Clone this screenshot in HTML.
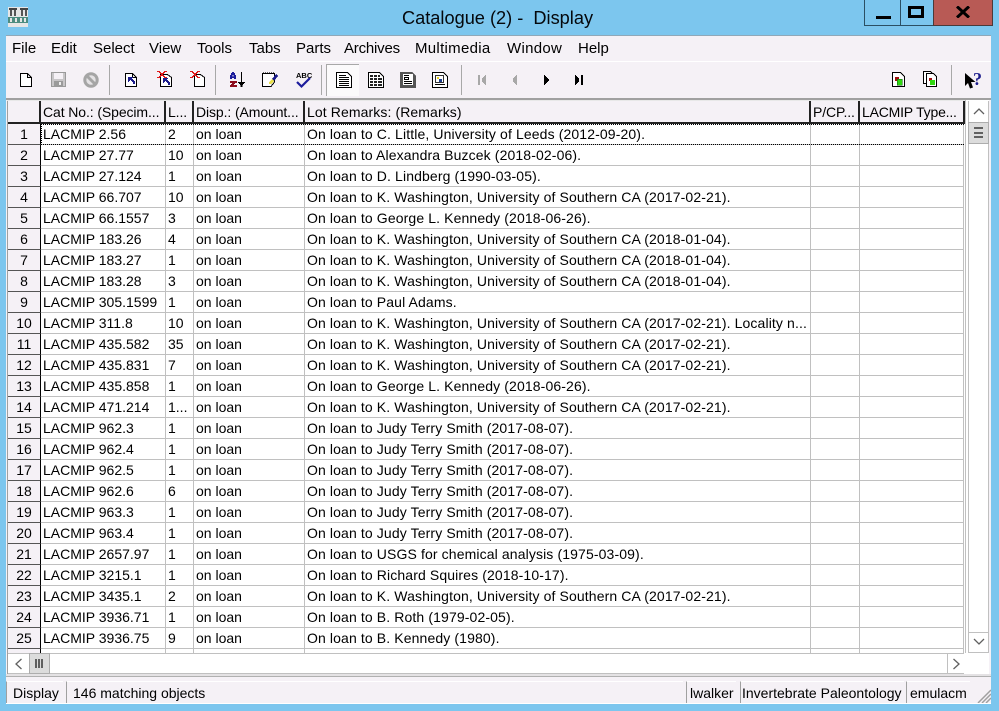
<!DOCTYPE html>
<html><head><meta charset="utf-8"><style>
html,body{margin:0;padding:0;width:999px;height:711px;overflow:hidden;background:#7cc6ee}
*{box-sizing:border-box}
body{font-family:"Liberation Sans",sans-serif;font-size:14px;color:#000;position:relative}
.a{position:absolute}
.t{position:absolute;white-space:pre;line-height:16px}
#menu span{position:absolute;top:41px;line-height:16px;font-size:15px}
svg{position:absolute;shape-rendering:crispEdges}
table{position:absolute;left:8px;top:124px;border-collapse:separate;border-spacing:0;table-layout:fixed;width:956px;background:#fff}
td{height:21px;padding:1px 0 0 2px;vertical-align:top;border-right:1px solid #c0c0c0;border-bottom:1px solid #c0c0c0;white-space:nowrap;overflow:hidden;line-height:18px;font-size:14px}
td:first-child{background:#f5f1f6;text-align:center;border-right:1px solid #000;border-bottom:1px solid #555;padding:1px 0 0}
td:nth-child(5){letter-spacing:.12px}
.h{position:absolute;top:101px;height:23px;background:#f5f1f6;border-right:2px solid #222;border-bottom:2px solid #222;line-height:23px;padding-left:2px;white-space:nowrap;overflow:hidden;letter-spacing:-.1px}
.sep{position:absolute;top:65px;height:30px;width:1px;background:#a8a8a8}
.st{position:absolute;top:681px;height:22px;border-left:1px solid #a0a0a0;border-top:1px solid #fff;line-height:23px;white-space:pre}
</style></head><body>

<svg style="left:8px;top:7px" width="20" height="20" viewBox="0 0 20 20"><rect width="20" height="20" fill="#e6e6e6"/><rect x="2" y="2" width="2" height="7" fill="#555"/><rect x="6" y="2" width="2" height="7" fill="#555"/><rect x="13" y="2" width="2" height="7" fill="#555"/><rect x="17" y="2" width="2" height="7" fill="#555"/><rect x="1" y="1" width="8" height="2" fill="#444"/><rect x="12" y="1" width="8" height="2" fill="#444"/><rect x="0" y="10" width="20" height="6" fill="#4d8c80"/><rect x="2" y="11" width="2" height="4" fill="#e6e6e6"/><rect x="7" y="11" width="2" height="4" fill="#e6e6e6"/><rect x="12" y="11" width="2" height="4" fill="#e6e6e6"/><rect x="16" y="11" width="2" height="4" fill="#e6e6e6"/></svg>
<div class="t" style="left:402px;top:7px;font-size:18.2px;line-height:22px;color:#05080c">Catalogue (2) -  Display</div>

<div class="a" style="left:864px;top:0;width:37px;height:26px;border:1px solid #2b4f63;border-top:0;border-right:0"></div>
<div class="a" style="left:900px;top:0;width:34px;height:26px;border:1px solid #2b4f63;border-top:0;border-right:0"></div>
<div class="a" style="left:933px;top:0;width:60px;height:26px;background:#b85a55;border:1px solid #4a3a3a;border-top:0"></div>
<div class="a" style="left:876px;top:16px;width:15px;height:3px;background:#000"></div>
<div class="a" style="left:908px;top:6px;width:16px;height:12px;border:3px solid #000"></div>
<svg style="left:956px;top:6px;shape-rendering:auto" width="14" height="12"><path d="M1 0.500L13 11.500M13 0.500L1 11.500" stroke="#000" stroke-width="3" fill="none"/></svg>

<div class="a" style="left:6px;top:35px;width:985px;height:669px;background:#f5f1f6;border-top:1px solid #90a8b8"></div>
<div class="a" style="left:6px;top:61px;width:985px;height:1px;background:#fff"></div>
<div id="menu">
<span style="left:12px">File</span><span style="left:51px">Edit</span><span style="left:93px">Select</span><span style="left:149px">View</span><span style="left:197px">Tools</span><span style="left:249px">Tabs</span><span style="left:296px">Parts</span><span style="left:344px;letter-spacing:-.2px">Archives</span><span style="left:415px;letter-spacing:.3px">Multimedia</span><span style="left:507px;letter-spacing:.3px">Window</span><span style="left:578px">Help</span>
</div>

<div class="sep" style="left:109px"></div><div class="sep" style="left:215px"></div><div class="sep" style="left:321px"></div><div class="sep" style="left:461px"></div><div class="sep" style="left:951px"></div>
<div class="a" style="left:326px;top:64px;width:33px;height:32px;background:#fbfafb;border-left:1px solid #a8a8a8;border-top:1px solid #a8a8a8"></div>

<svg style="left:19px;top:72px" width="14" height="16"><path d="M1.500 1.500H8.500L12.500 5.500V14.500H1.500Z M8.500 1.500V5.500H12.500" fill="#fff" stroke="#000"/></svg>
<svg style="left:51px;top:72px" width="15" height="15"><path d="M.5.5H14.500V14.500H.5Z" fill="#c8c6c8" stroke="#9a9a9a"/><rect x="3" y="1" width="9" height="6" fill="#f5f1f6"/><rect x="3" y="9" width="9" height="5" fill="#9a9a9a"/><rect x="8" y="10" width="2" height="3" fill="#eee"/></svg>
<svg style="left:83px;top:72px;shape-rendering:auto" width="16" height="16"><circle cx="8" cy="8" r="6.200" fill="#e4e2e4" stroke="#a5a5a5" stroke-width="3"/><path d="M4 4L12 12" stroke="#a5a5a5" stroke-width="3"/></svg>

<svg style="left:124px;top:72px" width="14" height="16"><path d="M1.500 1.500H8.500L12.500 5.500V14.500H1.500Z" fill="#fff" stroke="#000"/><path d="M8.500 1.500V5.500H12.500" fill="none" stroke="#000"/><path d="M4 5H9V6H8V7H9V8H10V9H11V12H9V10H8V9H7V8H6V9H5V10H4Z" fill="#1c1c8c"/></svg>
<svg style="left:157px;top:71px" width="17" height="17"><path d="M3.500 3.500H10.500L14.500 6.500V15.500H3.500Z" fill="#fff" stroke="#000"/><path d="M6 7H11V8H10V9H11V10H12V11H13V14H11V12H10V11H9V10H8V11H7V12H6Z" fill="#1c1c8c"/><path d="M0 0H3V1H4V2H6V1H7V0H10V1H8V2H7V3H6V4H7V5H8V6H10V7H7V6H6V5H4V6H3V7H0V6H2V5H3V4H4V3H3V2H2V1H0Z" fill="#e01818"/></svg>
<svg style="left:190px;top:71px" width="17" height="17"><path d="M4.500 3.500H10.500L14.500 6.500V15.500H4.500Z" fill="#fff" stroke="#000"/><path d="M0 0H3V1H4V2H6V1H7V0H10V1H8V2H7V3H6V4H7V5H8V6H10V7H7V6H6V5H4V6H3V7H0V6H2V5H3V4H4V3H3V2H2V1H0Z" fill="#e01818"/></svg>

<svg style="left:229px;top:71px" width="16" height="18"><path d="M3 1H5V2H6V4H7V8H5V7H3V8H1V4H2V2H3Z M3.500 4V5.500H4.500V4Z" fill="#1c1c9c" fill-rule="evenodd"/><path d="M1 10H8V12H6V13H5V14H8V16H1V14H2V13H3V12H1Z" fill="#8c0c1c"/><rect x="12" y="1" width="1" height="11" fill="#000"/><path d="M9 11H16V12H15V13H14V14H13.500V16H11.500V14H11V13H10V12H9Z" fill="#000"/></svg>
<svg style="left:261px;top:71px" width="18" height="18"><path d="M1.500 2.500H13.500V11L10 15.500H1.500Z" fill="#fff" stroke="#000"/><path d="M2 1H3V2H2ZM4 1H5V2H4ZM6 1H7V2H6ZM8 1H9V2H8ZM10 1H11V2H10ZM12 1H13V2H12Z" fill="#666"/><path d="M8 13H10L13 10L11 8L8 11Z" fill="#e8e048"/><path d="M11 8L15 3L17 5L13 10Z" fill="#1c1c8c"/></svg>
<svg style="left:295px;top:70px;shape-rendering:auto" width="17" height="19"><text x="1" y="8" font-family="Liberation Sans,sans-serif" font-size="7.500" font-weight="bold" fill="#000">ABC</text><path d="M2 12L6.500 16.500L15 8" fill="none" stroke="#1c1c9c" stroke-width="2.200"/></svg>

<svg style="left:336px;top:72px" width="16" height="16"><path d="M.5.5H11.500L15.500 4.500V15.500H.5Z" fill="#fff" stroke="#000"/><path d="M3 5H13V6H3ZM3 7H13V8H3ZM3 9H13V10H3ZM3 11H13V12H3ZM3 13H13V14H3ZM3 3H10V4H3Z" fill="#000"/></svg>
<svg style="left:368px;top:72px" width="16" height="16"><path d="M.5.5H11.500L15.500 4.500V15.500H.5Z" fill="#fff" stroke="#000"/><path d="M2 3H5V5H2ZM6 3H9V5H6ZM10 3H12V5H10ZM2 6H5V8H2ZM6 6H9V8H6ZM10 6H14V8H10ZM2 9H5V11H2ZM6 9H9V11H6ZM10 9H14V11H10ZM2 12H5V14H2ZM6 12H9V14H6ZM10 12H14V14H10Z" fill="#222"/></svg>
<svg style="left:400px;top:72px" width="16" height="16"><path d="M0 0H12L16 4V16H0Z" fill="#555"/><rect x="3" y="2" width="10" height="11" fill="#fff"/><path d="M4 3H9V4H4ZM4 5H9V8H4ZM4 9H12V10H4ZM4 11H12V12H4Z" fill="#000"/><rect x="5" y="6" width="3" height="1" fill="#fff"/></svg>
<svg style="left:432px;top:72px" width="16" height="16"><path d="M.5.5H11.500L15.500 4.500V15.500H.5Z" fill="#fff" stroke="#000"/><rect x="3.500" y="3.500" width="8" height="7" fill="#fff" stroke="#333"/><rect x="5" y="5" width="2" height="2" fill="#e8d020"/><rect x="7" y="7" width="3" height="3" fill="#1c3c8c"/><path d="M3 12H13V13H3Z" fill="#000"/></svg>

<svg style="left:477px;top:74px" width="11" height="12"><path d="M1 1H3V11H1ZM9 1V11H8V10H7V9H6V8H5V4H6V3H7V2H8V1Z" fill="#a8a8a8"/></svg>
<svg style="left:511px;top:74px" width="8" height="12"><path d="M6 1V11H5V10H4V9H3V8H2V4H3V3H4V2H5V1Z" fill="#a8a8a8"/></svg>
<svg style="left:543px;top:74px" width="8" height="12"><path d="M1 1V11H2V10H3V9H4V8H5V7H6V5H5V4H4V3H3V2H2V1Z" fill="#000"/></svg>
<svg style="left:574px;top:74px" width="11" height="12"><path d="M1 1V11H2V10H3V9H4V8H5V4H4V3H3V2H2V1ZM7 1H9V11H7Z" fill="#000"/></svg>

<svg style="left:892px;top:72px" width="13" height="15"><path d="M.5.5H8.500L12.500 4.500V14.500H.5Z" fill="#fff" stroke="#000"/><rect x="3" y="5" width="4" height="4" fill="#a01010"/><rect x="5" y="7" width="5" height="6" fill="#30d810" stroke="#0a5a0a" stroke-width=".5"/></svg>
<svg style="left:923px;top:71px" width="14" height="16"><path d="M.5.5H7.500L9.500 2.500V12.500H.5Z" fill="#fff" stroke="#000"/><path d="M3.500 2.500H10.500L13.500 5.500V15.500H3.500Z" fill="#fff" stroke="#000"/><rect x="6" y="7" width="3" height="3" fill="#a01010"/><rect x="7" y="9" width="5" height="5" fill="#30d810"/></svg>
<svg style="left:964px;top:71px;shape-rendering:auto" width="20" height="19"><path d="M1 2L1 15L4 12L6 17.500L9 16.500L7 11L11.500 11Z" fill="#000"/><text x="9" y="14" font-family="Liberation Serif,serif" font-size="18" font-weight="bold" fill="#1c1c8c">?</text></svg>

<div class="a" style="left:6px;top:98px;width:985px;height:2px;background:#a0a0a0"></div>
<div class="a" style="left:7px;top:100px;width:982px;height:574px;background:#fff;border-left:1px solid #a0a0a0"></div>
<div class="a" style="left:7px;top:100px;width:958px;height:1px;background:#e8e8e8"></div>

<div class="h" style="left:8px;width:33px"></div>
<div class="h" style="left:41px;width:125px">Cat No.: (Specim...</div>
<div class="h" style="left:166px;width:28px">L...</div>
<div class="h" style="left:194px;width:111px">Disp.: (Amount...</div>
<div class="h" style="left:305px;width:506px;letter-spacing:.1px">Lot Remarks: (Remarks)</div>
<div class="h" style="left:811px;width:49px">P/CP...</div>
<div class="h" style="left:860px;width:105px;letter-spacing:-.2px">LACMIP Type...</div>

<table><colgroup><col style="width:33px"><col style="width:125px"><col style="width:28px"><col style="width:111px"><col style="width:506px"><col style="width:49px"><col style="width:104px"></colgroup>
<tr><td>1</td><td>LACMIP 2.56</td><td>2</td><td>on loan</td><td>On loan to C. Little, University of Leeds (2012-09-20).</td><td></td><td></td></tr>
<tr><td>2</td><td>LACMIP 27.77</td><td>10</td><td>on loan</td><td>On loan to Alexandra Buzcek (2018-02-06).</td><td></td><td></td></tr>
<tr><td>3</td><td>LACMIP 27.124</td><td>1</td><td>on loan</td><td>On loan to D. Lindberg (1990-03-05).</td><td></td><td></td></tr>
<tr><td>4</td><td>LACMIP 66.707</td><td>10</td><td>on loan</td><td>On loan to K. Washington, University of Southern CA (2017-02-21).</td><td></td><td></td></tr>
<tr><td>5</td><td>LACMIP 66.1557</td><td>3</td><td>on loan</td><td>On loan to George L. Kennedy (2018-06-26).</td><td></td><td></td></tr>
<tr><td>6</td><td>LACMIP 183.26</td><td>4</td><td>on loan</td><td>On loan to K. Washington, University of Southern CA (2018-01-04).</td><td></td><td></td></tr>
<tr><td>7</td><td>LACMIP 183.27</td><td>1</td><td>on loan</td><td>On loan to K. Washington, University of Southern CA (2018-01-04).</td><td></td><td></td></tr>
<tr><td>8</td><td>LACMIP 183.28</td><td>3</td><td>on loan</td><td>On loan to K. Washington, University of Southern CA (2018-01-04).</td><td></td><td></td></tr>
<tr><td>9</td><td>LACMIP 305.1599</td><td>1</td><td>on loan</td><td>On loan to Paul Adams.</td><td></td><td></td></tr>
<tr><td>10</td><td>LACMIP 311.8</td><td>10</td><td>on loan</td><td>On loan to K. Washington, University of Southern CA (2017-02-21). Locality n...</td><td></td><td></td></tr>
<tr><td>11</td><td>LACMIP 435.582</td><td>35</td><td>on loan</td><td>On loan to K. Washington, University of Southern CA (2017-02-21).</td><td></td><td></td></tr>
<tr><td>12</td><td>LACMIP 435.831</td><td>7</td><td>on loan</td><td>On loan to K. Washington, University of Southern CA (2017-02-21).</td><td></td><td></td></tr>
<tr><td>13</td><td>LACMIP 435.858</td><td>1</td><td>on loan</td><td>On loan to George L. Kennedy (2018-06-26).</td><td></td><td></td></tr>
<tr><td>14</td><td>LACMIP 471.214</td><td>1...</td><td>on loan</td><td>On loan to K. Washington, University of Southern CA (2017-02-21).</td><td></td><td></td></tr>
<tr><td>15</td><td>LACMIP 962.3</td><td>1</td><td>on loan</td><td>On loan to Judy Terry Smith (2017-08-07).</td><td></td><td></td></tr>
<tr><td>16</td><td>LACMIP 962.4</td><td>1</td><td>on loan</td><td>On loan to Judy Terry Smith (2017-08-07).</td><td></td><td></td></tr>
<tr><td>17</td><td>LACMIP 962.5</td><td>1</td><td>on loan</td><td>On loan to Judy Terry Smith (2017-08-07).</td><td></td><td></td></tr>
<tr><td>18</td><td>LACMIP 962.6</td><td>6</td><td>on loan</td><td>On loan to Judy Terry Smith (2017-08-07).</td><td></td><td></td></tr>
<tr><td>19</td><td>LACMIP 963.3</td><td>1</td><td>on loan</td><td>On loan to Judy Terry Smith (2017-08-07).</td><td></td><td></td></tr>
<tr><td>20</td><td>LACMIP 963.4</td><td>1</td><td>on loan</td><td>On loan to Judy Terry Smith (2017-08-07).</td><td></td><td></td></tr>
<tr><td>21</td><td>LACMIP 2657.97</td><td>1</td><td>on loan</td><td>On loan to USGS for chemical analysis (1975-03-09).</td><td></td><td></td></tr>
<tr><td>22</td><td>LACMIP 3215.1</td><td>1</td><td>on loan</td><td>On loan to Richard Squires (2018-10-17).</td><td></td><td></td></tr>
<tr><td>23</td><td>LACMIP 3435.1</td><td>2</td><td>on loan</td><td>On loan to K. Washington, University of Southern CA (2017-02-21).</td><td></td><td></td></tr>
<tr><td>24</td><td>LACMIP 3936.71</td><td>1</td><td>on loan</td><td>On loan to B. Roth (1979-02-05).</td><td></td><td></td></tr>
<tr><td>25</td><td>LACMIP 3936.75</td><td>9</td><td>on loan</td><td>On loan to B. Kennedy (1980).</td><td></td><td></td></tr>
<tr><td>&nbsp;</td><td></td><td></td><td></td><td></td><td></td><td></td></tr>
</table>
<div class="a" style="left:41px;top:124px;width:923px;height:1px;border-top:1px dotted #000"></div>
<div class="a" style="left:41px;top:144px;width:927px;height:1px;border-top:1px dotted #000"></div>
<div class="a" style="left:41px;top:124px;width:1px;height:21px;border-left:1px dotted #000"></div>

<div class="a" style="left:8px;top:653px;width:956px;height:21px;background:#fff;border-top:1px solid #c0c0c0;border-bottom:1px solid #c0c0c0"></div>
<div class="a" style="left:29px;top:653px;width:21px;height:21px;background:#dcdcdc;border:1px solid #adadad"></div>
<div class="a" style="left:35px;top:659px;width:2px;height:9px;background:#606060"></div><div class="a" style="left:38px;top:659px;width:2px;height:9px;background:#606060"></div><div class="a" style="left:41px;top:659px;width:2px;height:9px;background:#606060"></div>
<div class="a" style="left:947px;top:653px;width:1px;height:21px;background:#c0c0c0"></div>
<svg style="left:14px;top:658px;shape-rendering:auto" width="10" height="12"><path d="M7.500 1L2 6L7.500 11" fill="none" stroke="#606060" stroke-width="1.300"/></svg>
<svg style="left:951px;top:658px;shape-rendering:auto" width="10" height="12"><path d="M2.500 1L8 6L2.500 11" fill="none" stroke="#606060" stroke-width="1.300"/></svg>
<div class="a" style="left:965px;top:100px;width:3px;height:553px;background:#fff;border-left:1px solid #c0c0c0"></div>
<div class="a" style="left:968px;top:101px;width:21px;height:552px;background:#fff;border-left:1px solid #c0c0c0;border-right:1px solid #c0c0c0"></div>
<div class="a" style="left:968px;top:122px;width:21px;height:22px;background:#dcdcdc;border:1px solid #adadad"></div>
<div class="a" style="left:974px;top:127px;width:9px;height:2px;background:#606060"></div><div class="a" style="left:974px;top:132px;width:9px;height:2px;background:#606060"></div><div class="a" style="left:974px;top:136px;width:9px;height:2px;background:#606060"></div>
<div class="a" style="left:968px;top:632px;width:21px;height:21px;border-top:1px solid #c0c0c0;border-bottom:1px solid #c0c0c0"></div>
<svg style="left:972px;top:106px;shape-rendering:auto" width="14" height="10"><path d="M2 8L7 3L12 8" fill="none" stroke="#606060" stroke-width="1.300"/></svg>
<svg style="left:972px;top:637px;shape-rendering:auto" width="14" height="10"><path d="M2 2L7 7L12 2" fill="none" stroke="#606060" stroke-width="1.300"/></svg>

<div class="a" style="left:6px;top:674px;width:985px;height:2px;background:#e4e2e4"></div>
<div class="a" style="left:6px;top:676px;width:985px;height:1px;background:#b0b0b0"></div>
<div class="a" style="left:6px;top:677px;width:985px;height:26px;background:#f5f1f6"></div>
<div class="a" style="left:6px;top:703px;width:985px;height:1px;background:#fff"></div>

<div class="st" style="left:6px;width:57px;padding-left:6px">Display</div>
<div class="st" style="left:66px;width:617px;padding-left:6px">146 matching objects</div>
<div class="st" style="left:686px;width:50px;padding-left:3px">lwalker</div>
<div class="st" style="left:740px;width:164px;padding-left:1px">Invertebrate Paleontology</div>
<div class="st" style="left:906px;width:64px;padding-left:3px">emulacm</div>
<svg style="left:976px;top:688px;shape-rendering:auto" width="15" height="15"><path d="M15 2L2 15M15 6L6 15M15 10L10 15" stroke="#a0a0a0" stroke-width="1.500" fill="none"/></svg>
</body></html>
